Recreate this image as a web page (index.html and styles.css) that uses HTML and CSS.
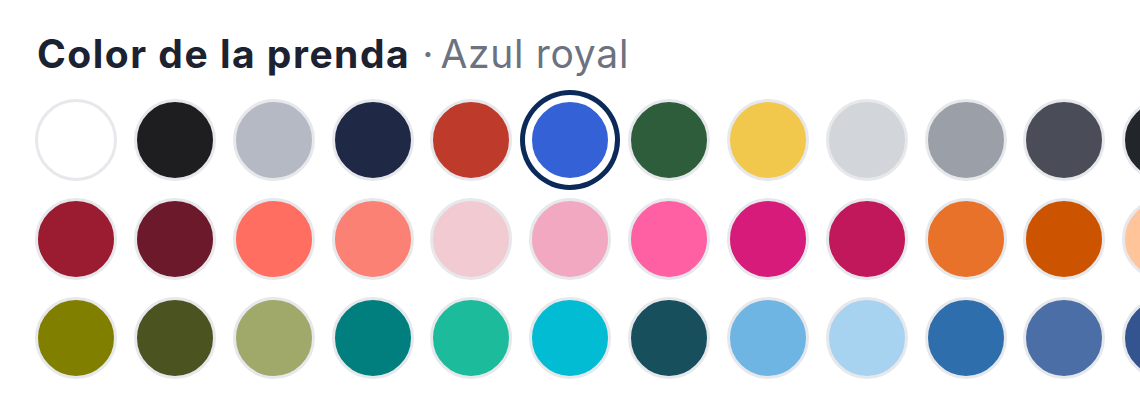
FILE: index.html
```html
<!DOCTYPE html>
<html lang="es">
<head>
<meta charset="utf-8">
<title>Color de la prenda</title>
<link rel="stylesheet" href="styles.css">
</head>
<body>
<section class="picker">
  <h2 class="picker-title"><span class="picker-label">Color de la prenda</span><span class="picker-sep">·</span><span class="picker-value">Azul royal</span></h2>
  <div class="swatches">
    <button class="swatch" style="background:#ffffff" aria-label="Blanco"></button>
    <button class="swatch" style="background:#1e1e20" aria-label="Negro"></button>
    <button class="swatch" style="background:#b4b9c3" aria-label="Gris perla"></button>
    <button class="swatch" style="background:#1f2946" aria-label="Azul marino"></button>
    <button class="swatch" style="background:#be3a2b" aria-label="Rojo"></button>
    <button class="swatch is-selected" style="background:#3461d6" aria-label="Azul royal"></button>
    <button class="swatch" style="background:#2e5d3b" aria-label="Verde bosque"></button>
    <button class="swatch" style="background:#f2c84c" aria-label="Amarillo"></button>
    <button class="swatch" style="background:#d2d5da" aria-label="Gris claro"></button>
    <button class="swatch" style="background:#9a9fa8" aria-label="Gris"></button>
    <button class="swatch" style="background:#4a4d57" aria-label="Gris oscuro"></button>
    <button class="swatch" style="background:#22262b" aria-label="Carbón"></button>

    <button class="swatch" style="background:#9b1c31" aria-label="Granate"></button>
    <button class="swatch" style="background:#6c1a2b" aria-label="Vino"></button>
    <button class="swatch" style="background:#ff6e61" aria-label="Coral"></button>
    <button class="swatch" style="background:#fa8174" aria-label="Salmón"></button>
    <button class="swatch" style="background:#f2cbd2" aria-label="Rosa pálido"></button>
    <button class="swatch" style="background:#f2a8c0" aria-label="Rosa claro"></button>
    <button class="swatch" style="background:#ff60a3" aria-label="Rosa"></button>
    <button class="swatch" style="background:#d71b7b" aria-label="Fucsia"></button>
    <button class="swatch" style="background:#c1185b" aria-label="Frambuesa"></button>
    <button class="swatch" style="background:#e8722a" aria-label="Naranja"></button>
    <button class="swatch" style="background:#cc5400" aria-label="Naranja quemado"></button>
    <button class="swatch" style="background:#ffc49a" aria-label="Melocotón"></button>

    <button class="swatch" style="background:#807f00" aria-label="Oliva"></button>
    <button class="swatch" style="background:#4b5320" aria-label="Verde militar"></button>
    <button class="swatch" style="background:#a0a86a" aria-label="Salvia"></button>
    <button class="swatch" style="background:#017f7e" aria-label="Verde azulado"></button>
    <button class="swatch" style="background:#1bbb9b" aria-label="Turquesa"></button>
    <button class="swatch" style="background:#02bcd4" aria-label="Cian"></button>
    <button class="swatch" style="background:#174f5c" aria-label="Petróleo"></button>
    <button class="swatch" style="background:#6fb5e3" aria-label="Celeste"></button>
    <button class="swatch" style="background:#a8d3f0" aria-label="Azul cielo"></button>
    <button class="swatch" style="background:#2e6ead" aria-label="Azul"></button>
    <button class="swatch" style="background:#4a6ea5" aria-label="Azul acero"></button>
    <button class="swatch" style="background:#34548f" aria-label="Azul índigo"></button>
  </div>
</section>
</body>
</html>
```

FILE: styles.css
```css
html, body {
  margin: 0;
  padding: 0;
  background: #ffffff;
  overflow: hidden;
}

.picker {
  width: 1140px;
  height: 408px;
  box-sizing: border-box;
  padding: 28px 0 0 35px;
  overflow: hidden;
  font-family: Inter, "Open Sans", "Liberation Sans", sans-serif;
}

.picker-title {
  margin: 0 0 19px 2px;
  font-size: 39px;
  line-height: 52px;
  font-weight: 700;
  color: #1d2230;
  white-space: nowrap;
}

.picker-label {
  letter-spacing: 1.5px;
}

.picker-sep {
  margin: 0 7px 0 12px;
  font-weight: 400;
  color: #6b7280;
}

.picker-value {
  font-weight: 400;
  color: #6b7280;
  letter-spacing: 0.7px;
}

.swatches {
  display: grid;
  grid-template-columns: repeat(12, 82px);
  grid-auto-rows: 82px;
  gap: 16.9px 16.85px;
}

.swatch {
  width: 82px;
  height: 82px;
  padding: 0;
  border: 3px solid #e7e8ec;
  border-radius: 50%;
  cursor: pointer;
  box-sizing: border-box;
}

.swatch.is-selected {
  border-color: #ffffff;
  box-shadow: 0 0 0 4px #ffffff, 0 0 0 9px #0b2a5a;
}
```
